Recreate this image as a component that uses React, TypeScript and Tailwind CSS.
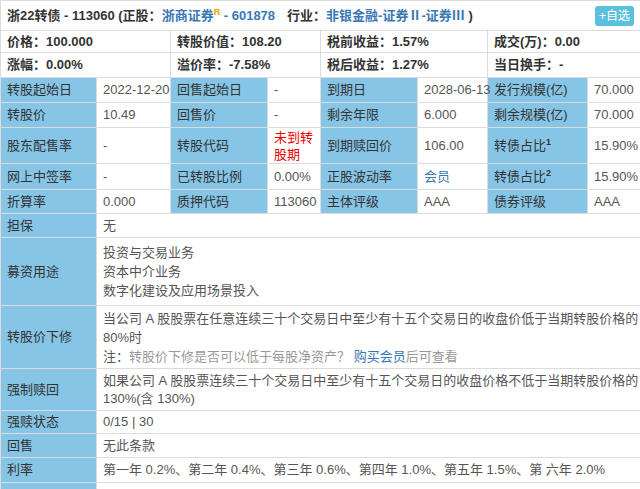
const B = "border border-[#dcdcdc] px-1.5 py-0 whitespace-nowrap";
const L = `bg-[#86c5e6] text-[#333] ${B}`;

function Lab({ children }: { children: React.ReactNode }) {
  return <td className={L}>{children}</td>;
}
function Val({ children, colSpan, c }: { children: React.ReactNode; colSpan?: number; c?: string }) {
  return (
    <td colSpan={colSpan} className={`bg-white ${c ?? "text-[#555]"} ${B}`}>
      {children}
    </td>
  );
}

export default function App() {
  return (
    <div
      className="w-[640px] h-[489px] overflow-hidden bg-white text-[13px] leading-[16px]"
      style={{ fontFamily: '"Liberation Sans", "Noto Sans CJK SC", sans-serif' }}
    >
      <table className="w-[640px] table-fixed border-collapse">
        <colgroup>
          <col className="w-[96px]" />
          <col className="w-[74px]" />
          <col className="w-[97px]" />
          <col className="w-[53px]" />
          <col className="w-[97px]" />
          <col className="w-[70px]" />
          <col className="w-[100px]" />
          <col className="w-[53px]" />
        </colgroup>
        <tbody>
          <tr className="h-[30px]">
            <td colSpan={8} className={B}>
              <div className="flex items-center justify-between">
                <span className="text-[13px] font-bold text-[#333]">
                  浙22转债 - 113060 (正股：
                  <span className="text-[#3a78b4]">
                    浙商证券<sup className="text-[#f2a000] text-[9px]">R</sup> - 601878
                  </span>
                  <span className="ml-3">行业：</span>
                  <span className="text-[#3a78b4]">非银金融-证券Ⅱ-证券Ⅲ</span> )
                </span>
                <span className="rounded-[3px] bg-[#5bc0de] px-1 text-[12px] leading-[20px] text-white">+自选</span>
              </div>
            </td>
          </tr>
          <tr className="h-[22px] font-bold text-[13px] text-[#333]">
            <td colSpan={2} className={B}>价格：100.000</td>
            <td colSpan={2} className={B}>转股价值：108.20</td>
            <td colSpan={2} className={B}>税前收益：1.57%</td>
            <td colSpan={2} className={B}>成交(万)：0.00</td>
          </tr>
          <tr className="h-[25px] font-bold text-[13px] text-[#333]">
            <td colSpan={2} className={B}>涨幅：0.00%</td>
            <td colSpan={2} className={B}>溢价率：-7.58%</td>
            <td colSpan={2} className={B}>税后收益：1.27%</td>
            <td colSpan={2} className={B}>当日换手：-</td>
          </tr>
          <tr className="h-[25px]">
            <Lab>转股起始日</Lab><Val>2022-12-20</Val>
            <Lab>回售起始日</Lab><Val>-</Val>
            <Lab>到期日</Lab><Val>2028-06-13</Val>
            <Lab>发行规模(亿)</Lab><Val>70.000</Val>
          </tr>
          <tr className="h-[25px]">
            <Lab>转股价</Lab><Val>10.49</Val>
            <Lab>回售价</Lab><Val>-</Val>
            <Lab>剩余年限</Lab><Val>6.000</Val>
            <Lab>剩余规模(亿)</Lab><Val>70.000</Val>
          </tr>
          <tr className="h-[36px]">
            <Lab>股东配售率</Lab><Val>-</Val>
            <Lab>转股代码</Lab>
            <td className="bg-white border border-[#dcdcdc] px-1.5 text-[#e00] leading-[17px]">未到转股期</td>
            <Lab>到期赎回价</Lab><Val>106.00</Val>
            <Lab>转债占比<sup className="text-[9px] font-bold">1</sup></Lab><Val>15.90%</Val>
          </tr>
          <tr className="h-[26px]">
            <Lab>网上中签率</Lab><Val>-</Val>
            <Lab>已转股比例</Lab><Val>0.00%</Val>
            <Lab>正股波动率</Lab><Val c="text-[#3a78b4]">会员</Val>
            <Lab>转债占比<sup className="text-[9px] font-bold">2</sup></Lab><Val>15.90%</Val>
          </tr>
          <tr className="h-[24px]">
            <Lab>折算率</Lab><Val>0.000</Val>
            <Lab>质押代码</Lab><Val>113060</Val>
            <Lab>主体评级</Lab><Val>AAA</Val>
            <Lab>债券评级</Lab><Val>AAA</Val>
          </tr>
          <tr className="h-[24px]">
            <Lab>担保</Lab><Val colSpan={7}>无</Val>
          </tr>
          <tr className="h-[68px]">
            <Lab>募资用途</Lab>
            <Val colSpan={7}>
              <div className="leading-[19px]">
                投资与交易业务<br />资本中介业务<br />数字化建设及应用场景投入
              </div>
            </Val>
          </tr>
          <tr className="h-[63px]">
            <Lab>转股价下修</Lab>
            <Val colSpan={7}>
              <div className="leading-[19px]">
                当公司 A 股股票在任意连续三十个交易日中至少有十五个交易日的收盘价低于当期转股价格的
                <br />80%时
                <br />
                <span className="text-[#555]">注：</span>
                <span className="text-[#999]">转股价下修是否可以低于每股净资产？ </span>
                <span className="text-[#3a78b4]">购买会员</span>
                <span className="text-[#999]">后可查看</span>
              </div>
            </Val>
          </tr>
          <tr className="h-[42px]">
            <Lab>强制赎回</Lab>
            <Val colSpan={7}>
              <div className="leading-[18px]">
                如果公司 A 股股票连续三十个交易日中至少有十五个交易日的收盘价格不低于当期转股价格的
                <br />130%(含 130%)
              </div>
            </Val>
          </tr>
          <tr className="h-[23px]">
            <Lab>强赎状态</Lab><Val colSpan={7}>0/15 | 30</Val>
          </tr>
          <tr className="h-[24px]">
            <Lab>回售</Lab><Val colSpan={7}>无此条款</Val>
          </tr>
          <tr className="h-[25px]">
            <Lab>利率</Lab>
            <Val colSpan={7}>第一年 0.2%、第二年 0.4%、第三年 0.6%、第四年 1.0%、第五年 1.5%、第 六年 2.0%</Val>
          </tr>
          <tr className="h-[25px]">
            <td className={L}></td>
            <td colSpan={7} className={`bg-white ${B}`}></td>
          </tr>
        </tbody>
      </table>
    </div>
  );
}
